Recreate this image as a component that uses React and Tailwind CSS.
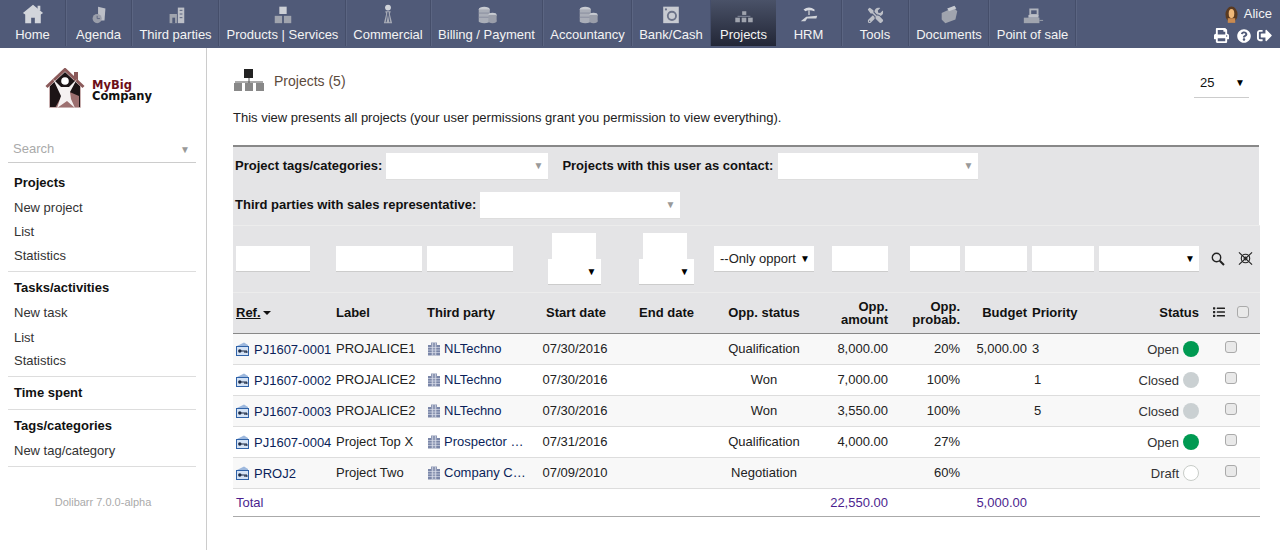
import React from "react";
import { FaPrint, FaQuestionCircle, FaSignOutAlt, FaList, FaTools } from "react-icons/fa";

const navIcons = {
    home: <><path d="M12 2 L23 11 L20.5 12.5 L20.5 22 L14 22 L14 16 L10 16 L10 22 L3.5 22 L3.5 12.5 L1 11Z" fill="#d2d5db"/><rect x="17" y="3" width="3" height="5" fill="#d2d5db"/></>,
    agenda: <><path d="M11 4 L19 6 L18 19 L11 19Z" fill="#bcbfc7"/><circle cx="10" cy="17" r="5" fill="#9a9eaa"/><path d="M10 14v3h3" stroke="#5c6480" fill="none"/></>,
    third: <><rect x="14" y="5" width="7" height="17" fill="#bcbfc7"/><rect x="5" y="12" width="8" height="10" fill="#a0a4ae"/><rect x="8" y="16" width="3" height="6" fill="#505a78"/><path d="M16 8h3M16 12h3M16 16h3" stroke="#505a78"/></>,
    products: <><rect x="8" y="4" width="8" height="8" fill="#cdd0d6"/><rect x="3" y="14" width="8" height="8" fill="#a0a4ae"/><rect x="13" y="14" width="8" height="8" fill="#a0a4ae"/></>,
    commercial: <><circle cx="12" cy="5" r="3.2" fill="#d0d3d9"/><path d="M9 9h6l-1 3 2.5 10h-9L10 12z" fill="#a8acb6"/><path d="M12 10l-2 11M12 10l2 11" stroke="#505a78"/></>,
    billing: <><ellipse cx="9" cy="7" rx="6" ry="2.8" fill="#c8cbd2"/><rect x="3" y="7" width="12" height="13" fill="#aaaeb8"/><ellipse cx="9" cy="20" rx="6" ry="2" fill="#aaaeb8"/><path d="M3 11h12M3 15.5h12" stroke="#858a9c"/><ellipse cx="18" cy="13" rx="4.5" ry="2.3" fill="#c8cbd2"/><rect x="13.5" y="13" width="9" height="7" fill="#9a9eaa"/><ellipse cx="18" cy="20" rx="4.5" ry="2" fill="#9a9eaa"/></>,
    bank: <><rect x="3.5" y="4" width="17" height="18" fill="#c8cbd2"/><circle cx="13" cy="14" r="4.5" fill="none" stroke="#6c7389" strokeWidth="2"/><circle cx="6.5" cy="7" r="1.2" fill="#6c7389"/></>,
    projects: <><rect x="10" y="9" width="4.5" height="4" fill="#a0a4ae"/><rect x="5" y="14" width="14" height="1" fill="#888ea0"/><rect x="2.5" y="16" width="5" height="5" fill="#a0a4ae"/><rect x="9.5" y="16" width="5" height="5" fill="#a0a4ae"/><rect x="16.5" y="16" width="5" height="5" fill="#a0a4ae"/></>,
    hrm: <><path d="M6 7 Q12 3 18 7 L18 9 Q12 7 8 9Z" fill="#d8dae0"/><path d="M12 8v5" stroke="#c8cbd2" strokeWidth="1.5"/><path d="M3 20 L9 15 L21 14 L20 17 L10 17 L8 20Z" fill="#d0d3d9"/></>,
    tools: <FaTools x="4" y="5" size={17} color="#bcbfc7" />,
    documents: <><path d="M4 11 L17 5 L21 9 L19 18 L8 22 L4 18Z" fill="#a0a4ae"/><path d="M10 6 L18 3 L20 6 L12 9Z" fill="#c8cbd2"/></>,
    pos: <><rect x="9" y="7" width="8" height="6" fill="none" stroke="#b0b4bd" strokeWidth="2"/><rect x="2" y="16" width="17" height="6" fill="#a0a4ae"/><path d="M7 13h11v3H7z" fill="#bcbfc7"/><path d="M19 19h4" stroke="#a0a4ae"/></>,
};

const navItems = [
    { label: "Home", icon: "home", w: "w-[66px]" },
    { label: "Agenda", icon: "agenda", w: "w-[66px]" },
    { label: "Third parties", icon: "third", w: "w-[87px] pl-px" },
    { label: "Products | Services", icon: "products", w: "w-[127px] pl-px" },
    { label: "Commercial", icon: "commercial", w: "w-[85px]" },
    { label: "Billing / Payment", icon: "billing", w: "w-[112px]" },
    { label: "Accountancy", icon: "billing", w: "w-[89px] pl-px" },
    { label: "Bank/Cash", icon: "bank", w: "w-[79px]" },
    { label: "Projects", icon: "projects", w: "w-[65px]", active: true },
    { label: "HRM", icon: "hrm", w: "w-[66px]" },
    { label: "Tools", icon: "tools", w: "w-[67px]" },
    { label: "Documents", icon: "documents", w: "w-[80px] pl-px" },
    { label: "Point of sale", icon: "pos", w: "w-[87px] pl-px" },
];

const rows = [
    { ref: "PJ1607-0001", label: "PROJALICE1", third: "NLTechno", start: "07/30/2016", opp: "Qualification", amount: "8,000.00", prob: "20%", budget: "5,000.00", priority: "3", left: true, status: "Open", dot: "bg-[#009a52]" },
    { ref: "PJ1607-0002", label: "PROJALICE2", third: "NLTechno", start: "07/30/2016", opp: "Won", amount: "7,000.00", prob: "100%", budget: "", priority: "1", status: "Closed", dot: "bg-[#cad0d2]" },
    { ref: "PJ1607-0003", label: "PROJALICE2", third: "NLTechno", start: "07/30/2016", opp: "Won", amount: "3,550.00", prob: "100%", budget: "", priority: "5", status: "Closed", dot: "bg-[#cad0d2]" },
    { ref: "PJ1607-0004", label: "Project Top X", third: "Prospector …", start: "07/31/2016", opp: "Qualification", amount: "4,000.00", prob: "27%", budget: "", priority: "", status: "Open", dot: "bg-[#009a52]" },
    { ref: "PROJ2", label: "Project Two", third: "Company C…", start: "07/09/2010", opp: "Negotiation", amount: "", prob: "60%", budget: "", priority: "", status: "Draft", dot: "bg-white border border-[#c8ccc8]" },
];

function Caret() {
    return <span className="text-[10px] leading-none text-black">▼</span>;
}

function FilterSelect({ width, text }) {
    return (
        <div className={`flex items-center justify-between h-[26px] bg-white border-b border-[#ccc] pl-[6px] pr-[4px] ${width}`}>
            <span className="whitespace-nowrap">{text}</span>
            <span className="text-[10px] leading-none text-[#000] shrink-0">▼</span>
        </div>
    );
}

function ComboFilter({ width }) {
    return (
        <div className={`flex items-center justify-end h-[27px] bg-white border-b border-[#ddd] pr-[5px] ${width}`}>
            <span className="text-[10px] leading-none text-[#999]">▼</span>
        </div>
    );
}

function TextFilter({ width }) {
    return <input className={`block h-[26px] bg-white border-b border-[#ccc] outline-none ${width}`} />;
}

function RefIcon() {
    return (
        <svg viewBox="0 0 13 14" className="w-[13px] h-[14px] shrink-0 mt-[-1px]">
            <path d="M1 4 L8 0.5 L12 3 L12 6 L1 6Z" fill="#9db8dd" />
            <rect x="0.5" y="4.5" width="12" height="9" fill="#d5e3f5" stroke="#2f62a8" />
            <circle cx="3.8" cy="9" r="1.7" fill="#1d2a44" />
            <path d="M5 9h6M9 9v2M10.8 9v2" stroke="#1d2a44" strokeWidth="1.2" />
        </svg>
    );
}

function CompanyIcon() {
    return (
        <svg viewBox="0 0 14 14" className="w-[14px] h-[14px] shrink-0">
            <rect x="4" y="0.5" width="6" height="13" fill="#8f99b5" />
            <rect x="1" y="3" width="3" height="10.5" fill="#7a86a8" />
            <rect x="10" y="3" width="3" height="10.5" fill="#7a86a8" />
            <path d="M1 5.5h12M1 8h12M1 10.5h12M5.5 1v12M8.5 1v12" stroke="#dfe3ee" strokeWidth="0.6" />
        </svg>
    );
}

function Checkbox() {
    return <span className="block w-3 h-3 rounded-[3px] border border-[#aaa] bg-[#e9e9e9]" />;
}

function Logo() {
    return (
        <div className="flex items-center justify-center h-[80px] pr-[9px]">
            <svg viewBox="0 0 40 40" className="w-[40px] h-[40px]">
                <rect x="29" y="4" width="4" height="10" fill="#8b5a5a" />
                <path d="M5 18 L20 4 L35 18 L35 40 L5 40Z" fill="#1c1416" />
                <path d="M20 22 L34 28 L34 40 L10 40Z" fill="#9c6f6f" />
                <path d="M1.5 19 L20 1.5 L38.5 19" fill="none" stroke="#8b5a5a" strokeWidth="3" />
                <path d="M4.5 18V39.5H35.5V18" fill="none" stroke="#c9b0b0" />
                <circle cx="20" cy="13" r="3.8" fill="#fff" />
                <path d="M8 11 L16 19 L24 19 L32 11 L25 24 L26 31 L30 40 L22 33 L12 40 L16 28Z" fill="#f5f1f1" />
            </svg>
            <div className="ml-[7px] mt-[6px] font-['DejaVu_Sans'] font-bold text-[11.5px] leading-[11px]">
                <div className="text-[#6d0f17]">MyBig</div>
                <div className="text-[#111]">Company</div>
            </div>
        </div>
    );
}

function MenuBlock({ title, items = [], className }) {
    return (
        <div className={`ml-2 mr-[10px] border-b border-[#ddd] ${className}`}>
            <div className="pl-[6px] h-6 leading-6 font-bold text-[#111]">{title}</div>
            {items.map((item) => (
                <div key={item.label} className={`pl-[6px] h-6 leading-6 text-[#333] ${item.gap}`}>{item.label}</div>
            ))}
        </div>
    );
}

function Sidebar() {
    return (
        <aside className="w-[207px] h-[502px] shrink-0 border-r border-[#ccc]">
            <Logo />
            <div className="ml-2 mr-[10px] mt-[13px] h-[22px] flex items-center justify-between border-b border-[#ccc] pb-[6px] pl-[5px] pr-[6px] text-[#aaa]">
                <span>Search</span>
                <span className="text-[10px] leading-none text-[#999] pt-[3px]">▼</span>
            </div>
            <MenuBlock
                title="Projects"
                items={[{ label: "New project", gap: "mt-px" }, { label: "List", gap: "" }, { label: "Statistics", gap: "" }]}
                className="pt-2 pb-[3px]"
            />
            <MenuBlock
                title="Tasks/activities"
                items={[{ label: "New task", gap: "mt-px" }, { label: "List", gap: "mt-px" }, { label: "Statistics", gap: "mt-[-1px]" }]}
                className="pt-1 pb-[3px]"
            />
            <MenuBlock title="Time spent" className="pt-1 pb-1" />
            <MenuBlock title="Tags/categories" items={[{ label: "New tag/category", gap: "mt-px" }]} className="pt-1 pb-[3px]" />
            <div className="mt-[27px] text-center text-[11px] leading-4 text-[#aaa]">Dolibarr 7.0.0-alpha</div>
        </aside>
    );
}

function ProjectTable() {
    const th = "font-bold text-[#111] align-middle px-[2px]";
    const oneLine = th + " pb-[2px]";
    return (
        <table className="table-fixed border-collapse w-[1027px] text-[#222]">
            <colgroup>
                <col className="w-[101px]" />
                <col className="w-[91px]" />
                <col className="w-[105px]" />
                <col className="w-[90px]" />
                <col className="w-[93px]" />
                <col className="w-[102px]" />
                <col className="w-[75px]" />
                <col className="w-[72px]" />
                <col className="w-[67px]" />
                <col className="w-[68px]" />
                <col className="w-[104px]" />
                <col className="w-[59px]" />
            </colgroup>
            <tbody>
                <tr className="h-[67px] bg-[#e4e4e6] border-t border-[#ececec] border-b border-b-[#ececec]">
                    <td className="pl-[3px]"><TextFilter width="w-[74px]" /></td>
                    <td className="pl-[2px]"><TextFilter width="w-[86px]" /></td>
                    <td className="pl-[2px]"><TextFilter width="w-[86px]" /></td>
                    <td>
                        <div className="flex flex-col items-center">
                            <input className="block w-[44px] h-[26px] ml-[-2px] bg-white outline-none" />
                            <div className="w-[53px] ml-[-2px]"><FilterSelect width="w-[53px]" text="" /></div>
                        </div>
                    </td>
                    <td>
                        <div className="flex flex-col items-center pl-[5px] mr-[6px]">
                            <input className="block w-[44px] h-[26px] ml-[-3px] bg-white outline-none" />
                            <FilterSelect width="w-[55px]" text="" />
                        </div>
                    </td>
                    <td className="pl-px"><FilterSelect width="w-[100px]" text="--Only opport" /></td>
                    <td><div className="flex justify-end pr-[2px]"><TextFilter width="w-[56px]" /></div></td>
                    <td><div className="flex justify-end pr-[2px]"><TextFilter width="w-[50px]" /></div></td>
                    <td><div className="flex justify-end pr-[2px]"><TextFilter width="w-[62px]" /></div></td>
                    <td className="pl-[3px]"><TextFilter width="w-[62px]" /></td>
                    <td className="pl-[2px]"><FilterSelect width="w-[100px]" text="" /></td>
                    <td>
                        <div className="flex items-center gap-[13px] pl-[10px]">
                            <svg viewBox="0 0 14 14" className="w-[14px] h-[14px]" fill="none" stroke="#222">
                                <circle cx="5.5" cy="5.5" r="4.2" strokeWidth="1.4" />
                                <path d="M8.7 8.7 L13 13" strokeWidth="2" />
                            </svg>
                            <svg viewBox="0 0 16 16" className="w-[15px] h-[15px] mt-[-1px]" fill="none" stroke="#222" strokeWidth="1.2">
                                <circle cx="8" cy="8" r="4.5" />
                                <circle cx="8" cy="8" r="1.5" />
                                <path d="M1 1.5 L15 14.5 M15 1.5 L1 14.5" />
                            </svg>
                        </div>
                    </td>
                </tr>
                <tr className="h-[41px] bg-[#e4e4e6] border-b border-[#888] leading-[13px]">
                    <td className={oneLine + " pl-[3px]"}>
                        <span className="underline">Ref.</span>
                        <span className="inline-block ml-[2px] w-0 h-0 border-x-[4px] border-x-transparent border-t-[4px] border-t-[#111] align-middle" />
                    </td>
                    <td className={oneLine}>Label</td>
                    <td className={oneLine}>Third party</td>
                    <td className={oneLine + " text-center"}><span className="ml-[2px]">Start date</span></td>
                    <td className={oneLine + " text-center"}>End date</td>
                    <td className={oneLine + " text-center"}>Opp. status</td>
                    <td className={th + " text-right"}>Opp.<br />amount</td>
                    <td className={th + " text-right"}>Opp.<br />probab.</td>
                    <td className={oneLine + " text-right"}>Budget</td>
                    <td className={oneLine + " pl-[3px]"}>Priority</td>
                    <td className={oneLine + " text-right"}>Status</td>
                    <td>
                        <div className="flex items-center gap-[11px] pl-[11px] pb-[2px]">
                            <FaList className="w-[14px] h-[12px] text-[#222]" />
                            <Checkbox />
                        </div>
                    </td>
                </tr>
                {rows.map((row, i) => (
                    <tr key={row.ref} className={`h-[31px] border-b border-[#ddd] ${i % 2 === 0 ? "bg-[#f8f8f8]" : "bg-white"}`}>
                        <td className="pl-[3px]">
                            <div className="flex items-center gap-[5px]">
                                <RefIcon />
                                <span className="text-[#0b1f5a] mt-[2px]">{row.ref}</span>
                            </div>
                        </td>
                        <td className="px-[2px] whitespace-nowrap">{row.label}</td>
                        <td className="px-[2px]">
                            <div className="flex items-center gap-[3px]">
                                <CompanyIcon />
                                <span className="whitespace-nowrap text-[#0b1f5a]">{row.third}</span>
                            </div>
                        </td>
                        <td className="text-center">{row.start}</td>
                        <td></td>
                        <td className="text-center">{row.opp}</td>
                        <td className="text-right pr-[2px]">{row.amount}</td>
                        <td className="text-right pr-[2px]">{row.prob}</td>
                        <td className="text-right pr-[2px]">{row.budget}</td>
                        <td className="pl-[3px]">
                            <span className={row.left ? "" : "ml-[2px]"}>{row.priority}</span>
                        </td>
                        <td className="pr-[2px]">
                            <div className="flex items-center justify-end gap-[4px]">
                                <span className="mt-[2px] text-[#333]">{row.status}</span>
                                <span className={`w-4 h-4 rounded-full ${row.dot}`} />
                            </div>
                        </td>
                        <td>
                            <div className="flex justify-center mt-[-4px]"><Checkbox /></div>
                        </td>
                    </tr>
                ))}
                <tr className="h-[28px] border-b border-[#aaa] text-[#4b1e8e]">
                    <td className="pl-[3px]">Total</td>
                    <td></td><td></td><td></td><td></td><td></td>
                    <td className="text-right pr-[2px]">22,550.00</td>
                    <td></td>
                    <td className="text-right pr-[2px]">5,000.00</td>
                    <td></td><td></td><td></td>
                </tr>
            </tbody>
        </table>
    );
}

function App() {
    return (
        <div className="w-[1280px] h-[550px] overflow-hidden bg-white font-['Liberation_Sans',Arial,sans-serif] text-[13px]">
            <nav className="flex justify-between h-12 bg-[#505a78] text-[#f4f4f4]">
                <div className="flex">
                    {navItems.map((item) => (
                        <div
                            key={item.label}
                            className={`flex flex-col items-center h-[46px] ${item.w} ${item.active ? "h-12 bg-gradient-to-b from-[#4a5268] to-[#232737]" : "border-r border-[#454e6a] shadow-[1px_0_0_#5b6582]"}`}
                        >
                            <svg viewBox="0 0 24 24" className="w-[22px] h-[22px] mt-[3px]">{navIcons[item.icon]}</svg>
                            <span className="mt-[2px] leading-[16px] whitespace-nowrap">{item.label}</span>
                        </div>
                    ))}
                </div>
                <div className="flex flex-col items-end pr-[8px] pt-[5px]">
                    <div className="flex items-center gap-[6px] leading-[18px]">
                        <svg viewBox="0 0 14 18" className="w-[13px] h-[17px]">
                            <ellipse cx="7" cy="9" rx="6.5" ry="8.5" fill="#5a3a20" />
                            <ellipse cx="7" cy="8" rx="3" ry="5" fill="#f0b878" />
                            <rect x="3" y="13" width="8" height="5" fill="#c98a50" />
                        </svg>
                        <span>Alice</span>
                    </div>
                    <div className="flex items-center gap-[6px] mt-[5px] text-white">
                        <FaPrint className="w-[15px] h-[15px] mr-[2px]" />
                        <FaQuestionCircle className="w-[14px] h-[14px]" />
                        <FaSignOutAlt className="w-[15px] h-[15px]" />
                    </div>
                </div>
            </nav>
            <div className="flex">
                <Sidebar />
                <main className="pl-[26px] flex-1">
                    <div className="flex justify-between h-[47px] w-[1016px] pt-[20px]">
                        <div className="flex items-start">
                            <svg viewBox="0 0 32 24" className="w-[32px] h-[24px] mt-px">
                                <rect x="11" y="0" width="9" height="9" fill="#222" />
                                <path d="M2 13H30M16 9v5" stroke="#555" />
                                <rect x="1" y="14" width="8" height="8" fill="#888" />
                                <rect x="12" y="14" width="8" height="8" fill="#888" />
                                <rect x="23" y="14" width="8" height="8" fill="#888" />
                            </svg>
                            <span className="ml-[9px] text-[14px] leading-[18px] mt-[4px] text-[#5c4a3c]">Projects (5)</span>
                        </div>
                        <div className="flex items-center justify-between w-[55px] h-[29px] mt-[1px] pl-[6px] pr-[4px] border-b border-[#ccc]">
                            <span className="text-[#111]">25</span>
                            <Caret />
                        </div>
                    </div>
                    <p className="mt-[15px] leading-[16px] text-[#222]">This view presents all projects (your user permissions grant you permission to view everything).</p>
                    <section className="mt-[19px] w-[1026px] h-[80px] bg-[#e4e4e6] border-t-2 border-[#888] pl-[2px] text-[#111] font-bold">
                        <div className="flex items-center gap-1 pt-[6px]">
                            <span className="pb-[2px]">Project tags/categories:</span>
                            <ComboFilter width="w-[162px]" />
                            <span className="ml-[10px] pb-[2px]">Projects with this user as contact:</span>
                            <div className="ml-px"><ComboFilter width="w-[200px]" /></div>
                        </div>
                        <div className="flex items-center gap-1 mt-[12px]">
                            <span className="pb-[2px]">Third parties with sales representative:</span>
                            <ComboFilter width="w-[200px]" />
                        </div>
                    </section>
                    <ProjectTable />
                </main>
            </div>
        </div>
    );
}

export default App;
